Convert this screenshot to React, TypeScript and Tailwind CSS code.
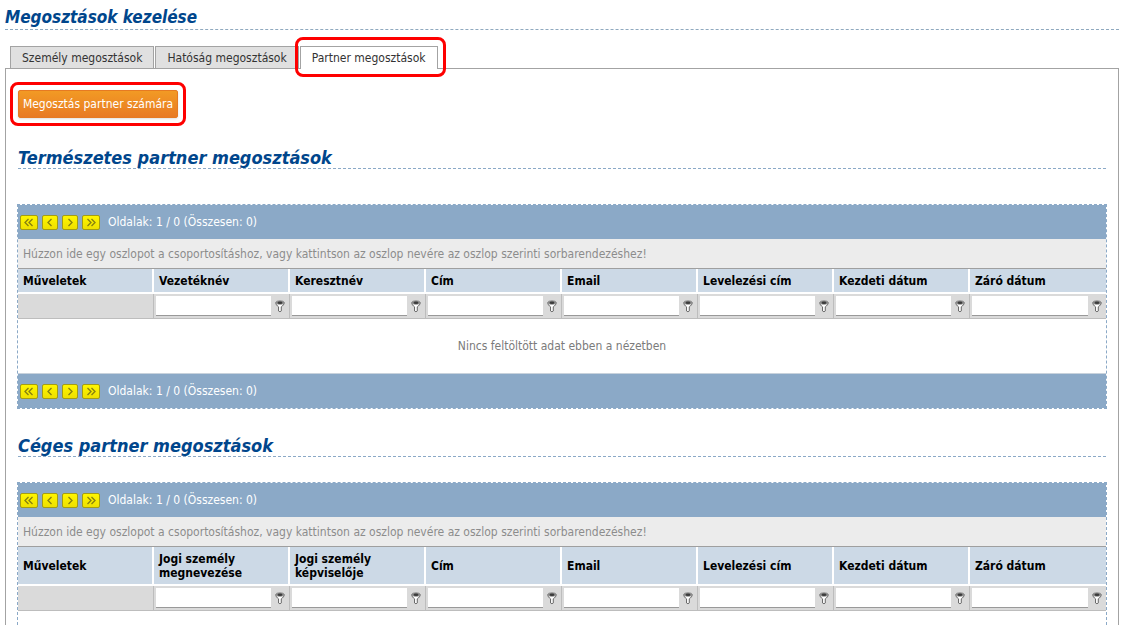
import { useState } from "react";
import clsx from "clsx";

const tabs = ["Személy megosztások", "Hatóság megosztások", "Partner megosztások"];

const personColumns = [
  "Műveletek",
  "Vezetéknév",
  "Keresztnév",
  "Cím",
  "Email",
  "Levelezési cím",
  "Kezdeti dátum",
  "Záró dátum",
];

const companyColumns = [
  "Műveletek",
  "Jogi személy megnevezése",
  "Jogi személy képviselője",
  "Cím",
  "Email",
  "Levelezési cím",
  "Kezdeti dátum",
  "Záró dátum",
];

const pagerButtons = [
  { label: "Első oldal", d: "M8.5 4L5 7.5L8.5 11M12.5 4L9 7.5L12.5 11", wide: true },
  { label: "Előző oldal", d: "M9.5 4L6 7.5L9.5 11", wide: false },
  { label: "Következő oldal", d: "M6.5 4L10 7.5L6.5 11", wide: false },
  { label: "Utolsó oldal", d: "M5.5 4L9 7.5L5.5 11M9.5 4L13 7.5L9.5 11", wide: true },
];

function Highlight({ className }: { className: string }) {
  return (
    <span
      aria-hidden="true"
      className={clsx("pointer-events-none absolute z-10 rounded-lg border-3 border-[#fe0000]", className)}
    />
  );
}

function FilterIcon() {
  return (
    <svg width="10" height="13" viewBox="0 0 10 13" fill="none">
      <path
        d="M0.8 2.6C0.8 4.4 1.8 5.6 3.5 6.8V11C3.5 11.8 6.3 11.8 6.3 11V6.8C8 5.6 9.2 4.4 9.2 2.6Z"
        fill="#f8f8f8"
        stroke="#5c5c5c"
        strokeWidth="0.9"
      />
      <ellipse cx="5" cy="2.5" rx="4.2" ry="1.8" fill="#8a8a8a" stroke="#8e8e8e" strokeWidth="0.8" />
      <ellipse cx="5" cy="2.7" rx="2.4" ry="1.2" fill="#3c3c3c" />
      <path d="M2.4 4.4C4 5.2 6 5.2 7.6 4.4L5.8 6.6H4.2Z" fill="#fff" />
    </svg>
  );
}

function Pager() {
  return (
    <div className="flex h-[34px] items-center gap-1 bg-[#8ba9c7] pl-[2px] text-white">
      {pagerButtons.map((b) => (
        <button
          key={b.label}
          type="button"
          aria-label={b.label}
          className={clsx(
            "flex h-[15px] items-center justify-center rounded-xs border border-[#a39d14] bg-linear-to-b from-[#fff600] to-[#eee000]",
            b.wide ? "w-[18px]" : "w-4"
          )}
        >
          <svg
            viewBox={b.wide ? "0 0 18 15" : "0 0 16 15"}
            className={clsx("h-[15px] shrink-0", b.wide ? "w-[18px]" : "w-4")}
            fill="none"
            stroke="#857f10"
            strokeWidth="1.3"
          >
            <path d={b.d} />
          </svg>
        </button>
      ))}
      <span className="ml-1">Oldalak: 1 / 0 (Összesen: 0)</span>
    </div>
  );
}

type GridProps = {
  columns: string[];
  tall?: boolean;
  open?: boolean; // no footer, the frame runs on to the end of the page
};

function Grid({ columns, tall, open }: GridProps) {
  return (
    <div
      className={clsx(
        "-mx-px border border-dashed border-[#8ba9c7]",
        open && "flex-1 border-b-0"
      )}
    >
      <Pager />
      <p className="h-[29px] bg-[#ececec] pl-[5px] leading-[30px] text-[#8c8c8c]">
        Húzzon ide egy oszlopot a csoportosításhoz, vagy kattintson az oszlop nevére az oszlop szerinti
        sorbarendezéshez!
      </p>
      <table className="w-full table-fixed border-separate border-spacing-0 border-t border-[#9f9f9f]">
        <thead>
          <tr className={tall ? "h-[39px]" : "h-[25px]"}>
            {columns.map((c) => (
              <th
                key={c}
                scope="col"
                className="border-r-2 border-b-2 border-white bg-[#ccd9e6] px-[5px] text-left leading-[14px] font-bold text-black last:border-r-0"
              >
                {c}
              </th>
            ))}
          </tr>
          <tr className="h-[25px] bg-[#dadada]">
            {columns.map((c, i) => (
              <td
                key={c}
                className="border-r border-b border-[#bdbdbd] py-0 pr-1 pl-[2px] last:border-r-0"
              >
                {i > 0 && (
                  <div className="flex items-center gap-1">
                    <input
                      type="text"
                      aria-label={`${c} szűrő`}
                      className="h-5 min-w-0 flex-1 border-b border-[#999] bg-white px-1 outline-none"
                    />
                    <button type="button" aria-label={`${c} szűrő feltétel`} className="shrink-0">
                      <FilterIcon />
                    </button>
                  </div>
                )}
              </td>
            ))}
          </tr>
        </thead>
        {!open && (
          <tbody>
            <tr className="h-[55px]">
              <td
                colSpan={columns.length}
                className="border-b border-[#c8d2dc] text-center text-[#7b7b7b]"
              >
                Nincs feltöltött adat ebben a nézetben
              </td>
            </tr>
          </tbody>
        )}
      </table>
      {!open && <Pager />}
    </div>
  );
}

function SectionTitle({ children }: { children: string }) {
  return (
    <h2 className="border-b border-dashed border-[#8ba9c7] text-[18px] leading-5 font-bold text-[#00468c] italic">
      {children}
    </h2>
  );
}

export default function App() {
  const [active, setActive] = useState(2);

  return (
    <div className="flex min-h-screen flex-col bg-white pt-[6px] pr-[6px] pl-[5px] text-[12px] leading-4 text-[#333] font-['DejaVu_Sans_Condensed','DejaVu_Sans',sans-serif]">
      <h1 className="border-b border-dashed border-[#8fa9bf] text-[17px] leading-[23px] font-bold text-[#00468c] italic">
        Megosztások kezelése
      </h1>

      {/* Tabs */}
      <div role="tablist" className="mt-4 flex h-[22px] gap-px pl-[5px]">
        {tabs.map((t, i) => (
          <div key={t} className="relative">
            <button
              type="button"
              role="tab"
              aria-selected={i === active}
              onClick={() => setActive(i)}
              className={clsx(
                "relative z-[1] block border border-b-0 border-[#a3a3a3] px-[11px] text-[#333]",
                i === active ? "h-[23px] bg-white" : "h-[22px] bg-[#e0e0e0]"
              )}
            >
              {t}
            </button>
            {i === 2 && <Highlight className="-inset-y-[9px] -right-2 -left-[5px]" />}
          </div>
        ))}
      </div>

      <main className="flex flex-1 flex-col border border-b-0 border-[#a3a3a3] px-3 pt-[21px]">
        {/* Share button */}
        <div className="relative w-fit">
          <button
            type="button"
            className="block h-7 w-40 rounded-xs border border-[#e67a22] bg-linear-to-b from-[#f29a24] to-[#e87a24] whitespace-nowrap text-white shadow-sm"
          >
            Megosztás partner számára
          </button>
          <Highlight className="-inset-2" />
        </div>

        <section className="mt-[30px]">
          <SectionTitle>Természetes partner megosztások</SectionTitle>
          <div className="mt-[35px]">
            <Grid columns={personColumns} />
          </div>
        </section>

        <section className="mt-[27px] flex flex-1 flex-col">
          <SectionTitle>Céges partner megosztások</SectionTitle>
          <div className="mt-[25px] flex flex-1 flex-col">
            <Grid columns={companyColumns} tall open />
          </div>
        </section>
      </main>
    </div>
  );
}
